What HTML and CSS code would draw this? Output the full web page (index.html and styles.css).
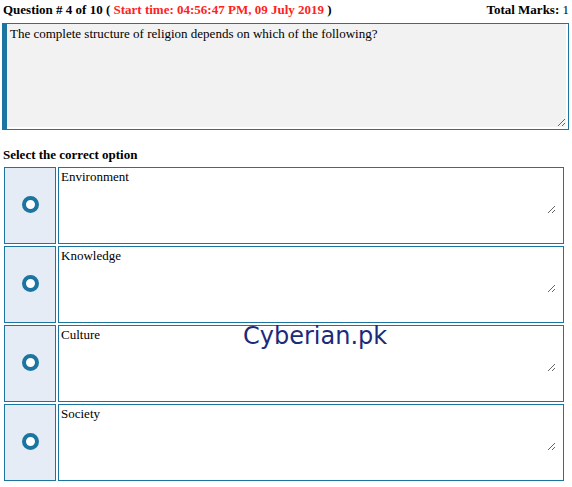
FILE: index.html
```html
<!DOCTYPE html>
<html lang="en">
<head>
  <meta charset="UTF-8" />
  <title>Quiz - Question 4</title>
  <link rel="stylesheet" href="styles.css">
</head>
<body>

<div class="quiz-head">
  <div class="quiz-title">
    Question # 4 of 10 ( <span class="start-time">Start time: 04:56:47 PM, 09 July 2019</span> )
  </div>
  <div class="total-marks">Total Marks: <span class="marks-value">1</span></div>
</div>

<div class="question-box">
  <textarea class="question-text" readonly>The complete structure of religion depends on which of the following?</textarea>
</div>

<div class="select-label">Select the correct option</div>

<div class="options">
  <div class="option-radio"><span class="radio"></span></div>
  <div class="option-text"><textarea readonly>Environment</textarea></div>

  <div class="option-radio"><span class="radio"></span></div>
  <div class="option-text"><textarea readonly>Knowledge</textarea></div>

  <div class="option-radio"><span class="radio"></span></div>
  <div class="option-text"><textarea readonly>Culture</textarea></div>

  <div class="option-radio"><span class="radio"></span></div>
  <div class="option-text"><textarea readonly>Society</textarea></div>
</div>

<div class="watermark">Cyberian.pk</div>

</body>
</html>
```

FILE: styles.css
```css
body {
  margin: 0 3px 0 2px;
  font-family: 'Liberation Serif', 'Times New Roman', serif;
  font-size: 13px;
  color: #000;
  background: #fff;
  position: relative;
}

.quiz-head {
  display: flex;
  justify-content: space-between;
  align-items: center;
  height: 20px;
  padding-left: 1px;
  font-weight: bold;
  margin-bottom: 3px;
}

.start-time {
  color: #f22;
}

.marks-value {
  font-weight: normal;
}

.question-box {
  border: 1px solid #1b75a0;
  border-left-width: 5px;
  padding: 0 2px 2px 0;
  height: 103px;
}

.question-text {
  display: block;
  box-sizing: border-box;
  width: 100%;
  height: 100%;
  margin: 0;
  padding: 2px 3px;
  border: none;
  outline: none;
  background: #f2f2f2;
  font-family: inherit;
  font-size: 13px;
  color: #000;
}

.select-label {
  font-weight: bold;
  line-height: 15px;
  margin: 17px 0 5px 1px;
}

.options {
  display: grid;
  grid-template-columns: 52px 1fr;
  grid-auto-rows: 77px;
  gap: 2px;
  margin: 0 5px 0 2px;
}

.option-radio {
  border: 1px solid #1b75a0;
  background: #e5ecf6;
  display: flex;
  align-items: center;
  justify-content: center;
}

.radio {
  box-sizing: border-box;
  width: 17px;
  height: 17px;
  border: 4px solid #1b75a0;
  border-radius: 50%;
  background: #fff;
  margin-top: -3px;
}

.option-text {
  border: 1px solid #1b75a0;
}

.option-text textarea {
  display: block;
  box-sizing: border-box;
  width: calc(100% - 7px);
  height: 46px;
  margin: 0;
  padding: 1px 2px;
  border: none;
  outline: none;
  background: #fff;
  font-family: inherit;
  font-size: 13px;
  color: #000;
}

.watermark {
  position: absolute;
  left: 241px;
  top: 322px;
  font-family: 'DejaVu Sans', Verdana, sans-serif;
  font-size: 24px;
  color: #1c2a7a;
}
```
